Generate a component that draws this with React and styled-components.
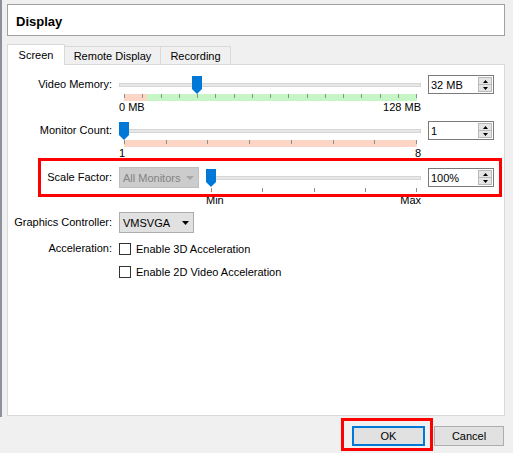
import React from 'react'
import styled, { createGlobalStyle, css } from 'styled-components'

const GlobalStyle = createGlobalStyle`
  html, body { margin: 0; padding: 0; background: #f0f0f0; }
  body {
    font-family: "Liberation Sans", Arial, sans-serif;
    font-size: 11px;
    color: #000;
  }
`

const Window = styled.div`
  width: 513px;
  height: 453px;
  background: #f0f0f0;
  display: flex;
  flex-direction: column;
  overflow: hidden;
`
const Body = styled.div`
  height: 417px;
  box-sizing: border-box;
  border-left: 2px solid #8d929a;
  padding: 4px 8px 1px 5px;
  display: flex;
  flex-direction: column;
`
const Header = styled.div`
  height: 32px;
  box-sizing: border-box;
  border: 1px solid #a0a0a0;
  background: #fff;
  padding: 2px 0 0 8px;
  display: flex;
  align-items: center;
  font-size: 13px;
  font-weight: bold;
`
const TabBar = styled.div`
  margin-top: 8px;
  height: 20px;
  display: flex;
  align-items: flex-end;
  position: relative;
  z-index: 1;
`
const Tab = styled.div`
  width: ${p => p.$w}px;
  height: 18px;
  line-height: 18px;
  box-sizing: border-box;
  text-align: center;
  border: 1px solid #d9d9d9;
  border-bottom: none;
  background: #f0f0f0;
  & + & { margin-left: -1px; }
  ${p => p.$active && css`
    height: 21px;
    margin-bottom: -1px;
    padding-top: 1px;
    background: #fff;
  `}
`
const Pane = styled.div`
  flex: 1;
  box-sizing: border-box;
  background: #fff;
  border: 1px solid #d9d9d9;
  padding-top: 10px;
  display: flex;
  flex-direction: column;
`
const Row = styled.div`
  display: flex;
  align-items: ${p => p.$center ? 'center' : 'flex-start'};
  height: ${p => p.$h ? `${p.$h}px` : 'auto'};
  margin-top: ${p => p.$mt || 0}px;
`
const HighlightRow = styled(Row)`
  box-sizing: border-box;
  margin-left: 33px;
  width: 458px;
  padding-top: 6px;
  outline: 3px solid #ff0000;
`
const Label = styled.div`
  width: ${p => p.$w || 104}px;
  flex-shrink: 0;
  text-align: right;
  line-height: ${p => p.$lh || 19}px;
  margin-right: 7px;
  white-space: nowrap;
`
const SliderCol = styled.div`
  width: ${p => p.$w}px;
  margin-right: 7px;
  display: flex;
  flex-direction: column;
`
const SliderTrack = styled.div`
  position: relative;
  height: ${p => p.$h || 19}px;
  display: flex;
  align-items: center;
`
const Groove = styled.div`
  flex: 1;
  height: 4px;
  box-sizing: border-box;
  background: #e7e7e7;
  border: 1px solid #d6d6d6;
`
const Thumb = styled.svg`
  position: absolute;
  top: 50%;
  margin-top: -9px;
  width: 10px;
  height: 18px;
`
const TickBar = styled.div`
  margin: 0 4px 0 5px;
  height: ${p => p.$h}px;
  display: flex;
  justify-content: space-between;
  align-items: flex-start;
  background: ${p => p.$pink == null ? 'transparent' : `linear-gradient(to right, #fcd5c4 ${p.$pink}px, #c6f6c6 ${p.$pink}px)`};
`
const Tick = styled.div`
  width: 1px;
  height: 4px;
  background: #8e8e8e;
`
const ScaleLabels = styled.div`
  display: flex;
  justify-content: space-between;
  line-height: 13px;
  margin-top: ${p => p.$mt || 0}px;
`
const SpinBox = styled.div`
  width: 66px;
  height: 19px;
  box-sizing: border-box;
  border: 1px solid #7a7a7a;
  background: #fff;
  display: flex;
  align-items: center;
  padding: 1px 1px 1px 2px;
  margin-top: ${p => p.$mt || 0}px;
`
const SpinValue = styled.span`
  flex: 1;
`
const SpinButtons = styled.div`
  width: 14px;
  height: 100%;
  display: flex;
  flex-direction: column;
`
const SpinBtn = styled.div`
  flex: 1;
  box-sizing: border-box;
  background: #e5e5e5;
  border: 1px solid #b9b9b9;
  display: flex;
  align-items: center;
  justify-content: center;
  & + & { margin-top: -1px; }
`
const Combo = styled.div`
  width: ${p => p.$w}px;
  height: 21px;
  box-sizing: border-box;
  flex-shrink: 0;
  margin-right: 7px;
  display: flex;
  align-items: center;
  padding: 0 4px 0 3px;
  background: ${p => p.$disabled ? '#cccccc' : '#e1e1e1'};
  border: 1px solid ${p => p.$disabled ? '#bfbfbf' : '#adadad'};
  color: ${p => p.$disabled ? '#838383' : '#000'};
`
const ComboText = styled.span`
  flex: 1;
`
const Check = styled.div`
  width: 12px;
  height: 12px;
  box-sizing: border-box;
  border: 1px solid #333;
  background: #fff;
  margin-right: 5px;
`
const Footer = styled.div`
  flex: 1;
  display: flex;
  justify-content: flex-end;
  align-items: flex-start;
  padding: 4px 9px 0 0;
`
const FocusRing = styled.div`
  padding: 5px 5px 2px 8px;
  outline: 3px solid #ff0000;
`
const Button = styled.div`
  width: ${p => p.$w}px;
  height: 20px;
  box-sizing: border-box;
  background: #e1e1e1;
  border: ${p => p.$default ? '2px solid #0078d7' : '1px solid #adadad'};
  display: flex;
  align-items: center;
  justify-content: center;
  margin-top: ${p => p.$mt || 0}px;
  margin-left: ${p => p.$ml || 0}px;
`

const Arrow = ({ up, color = '#000', w = 5, h = 3 }) => (
  <svg width={w} height={h} viewBox={`0 0 ${w} ${h}`}>
    <polygon points={up ? `0,${h} ${w / 2},0 ${w},${h}` : `0,0 ${w},0 ${w / 2},${h}`} fill={color} />
  </svg>
)

const Slider = ({ value, span, h }) => (
  <SliderTrack $h={h}>
    <Groove />
    <Thumb viewBox="0 0 10 18" style={{ left: Math.round(value * span) }}>
      <polygon points="0,0 10,0 10,13 5,18 0,13" fill="#0078d7" />
    </Thumb>
  </SliderTrack>
)

const Ticks = ({ count, h, pink }) => (
  <TickBar $h={h} $pink={pink}>
    {Array.from({ length: count }).map((_, i) => <Tick key={i} />)}
  </TickBar>
)

const Spin = ({ children, mt }) => (
  <SpinBox $mt={mt}>
    <SpinValue>{children}</SpinValue>
    <SpinButtons>
      <SpinBtn><Arrow up /></SpinBtn>
      <SpinBtn><Arrow /></SpinBtn>
    </SpinButtons>
  </SpinBox>
)

const App = () => (
  <>
    <GlobalStyle />
    <Window>
      <Body>
        <Header>Display</Header>
        <TabBar>
          <Tab $w={58} $active>Screen</Tab>
          <Tab $w={97}>Remote Display</Tab>
          <Tab $w={71}>Recording</Tab>
        </TabBar>
        <Pane>
          <Row>
            <Label>Video Memory:</Label>
            <SliderCol $w={302}>
              <Slider value={0.25} span={292} />
              <Ticks count={17} h={7} pink={23} />
              <ScaleLabels><span>0 MB</span><span>128 MB</span></ScaleLabels>
            </SliderCol>
            <Spin>32 MB</Spin>
          </Row>
          <Row $mt={7}>
            <Label>Monitor Count:</Label>
            <SliderCol $w={302}>
              <Slider value={0} span={292} />
              <Ticks count={8} h={7} pink={293} />
              <ScaleLabels><span>1</span><span>8</span></ScaleLabels>
            </SliderCol>
            <Spin>1</Spin>
          </Row>
          <HighlightRow $h={33} $mt={1}>
            <Label $w={71} $lh={21}>Scale Factor:</Label>
            <Combo $w={80} $disabled>
              <ComboText>All Monitors</ComboText>
              <Arrow color="#a6a6a6" w={8} h={4} />
            </Combo>
            <SliderCol $w={215}>
              <Slider value={0} span={205} h={21} />
              <Ticks count={5} h={4} />
              <ScaleLabels $mt={2}><span>Min</span><span>Max</span></ScaleLabels>
            </SliderCol>
            <Spin mt={1}>100%</Spin>
          </HighlightRow>
          <Row $h={21} $mt={18}>
            <Label $lh={21}>Graphics Controller:</Label>
            <Combo $w={75}>
              <ComboText>VMSVGA</ComboText>
              <Arrow w={7} h={4} />
            </Combo>
          </Row>
          <Row $h={21} $mt={5} $center>
            <Label $lh={21}>Acceleration:</Label>
            <Check />
            <span>Enable 3D Acceleration</span>
          </Row>
          <Row $h={21} $mt={2} $center>
            <Label $lh={21} />
            <Check />
            <span>Enable 2D Video Acceleration</span>
          </Row>
        </Pane>
      </Body>
      <Footer>
        <FocusRing>
          <Button $w={73} $default>OK</Button>
        </FocusRing>
        <Button $w={70} $mt={5} $ml={4}>Cancel</Button>
      </Footer>
    </Window>
  </>
)

export default App
